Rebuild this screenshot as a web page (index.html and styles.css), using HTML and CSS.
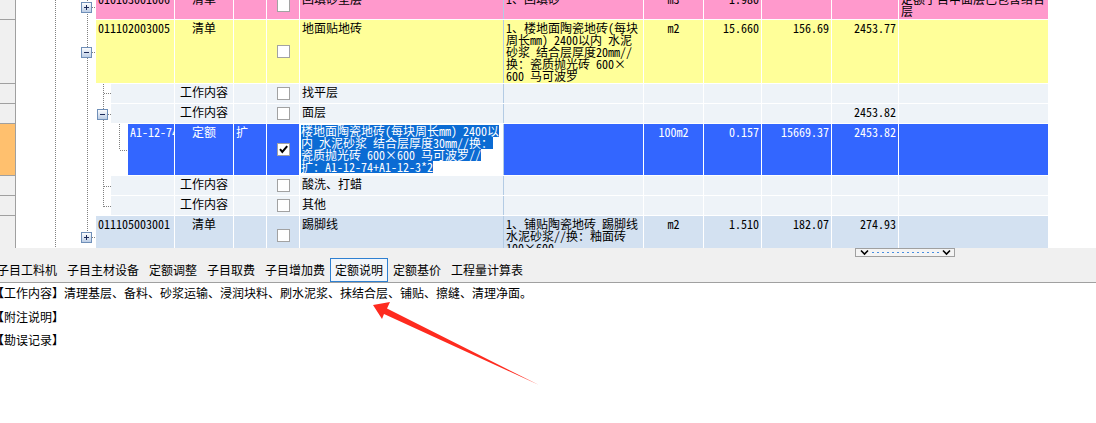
FILE: index.html
```html
<!DOCTYPE html>
<html>
<head>
<meta charset="utf-8">
<link rel="stylesheet" href="styles.css">
</head>
<body>
<div class="app">
  <div class="grid-area">
    <div class="rows">
      <div class="row pink h28">
        <div class="rh"></div><div class="gut"></div>
        <div class="c c1">010103001006</div>
        <div class="c c2">清单</div>
        <div class="c c3"></div>
        <div class="c c4"><span class="cb"></span></div>
        <div class="c c5">回填砂垫层</div>
        <div class="c c6">1、回填砂</div>
        <div class="c c7">m3</div>
        <div class="c c8">1.980</div>
        <div class="c c9"></div>
        <div class="c c10"></div>
        <div class="c c11">定额子目中面层已包含结合<br>层</div>
      </div>
      <div class="row yel h63">
        <div class="rh"></div><div class="gut"></div>
        <div class="c c1">011102003005</div>
        <div class="c c2">清单</div>
        <div class="c c3"></div>
        <div class="c c4"><span class="cb"></span></div>
        <div class="c c5">地面贴地砖</div>
        <div class="c c6">1、楼地面陶瓷地砖(每块<br>周长mm) 2400以内 水泥<br>砂浆 结合层厚度20mm//<br>换：瓷质抛光砖 600×<br>600 马可波罗</div>
        <div class="c c7">m2</div>
        <div class="c c8">15.660</div>
        <div class="c c9">156.69</div>
        <div class="c c10">2453.77</div>
        <div class="c c11"></div>
      </div>
      <div class="row sub h19">
        <div class="rh"></div><div class="gut"></div>
        <div class="c c1"></div>
        <div class="c c2">工作内容</div>
        <div class="c c3"></div>
        <div class="c c4"><span class="cb"></span></div>
        <div class="c c5">找平层</div>
        <div class="c c6"></div>
        <div class="c c7"></div>
        <div class="c c8"></div>
        <div class="c c9"></div>
        <div class="c c10"></div>
        <div class="c c11"></div>
      </div>
      <div class="row sub h19">
        <div class="rh"></div><div class="gut"></div>
        <div class="c c1"></div>
        <div class="c c2">工作内容</div>
        <div class="c c3"></div>
        <div class="c c4"><span class="cb"></span></div>
        <div class="c c5">面层</div>
        <div class="c c6"></div>
        <div class="c c7"></div>
        <div class="c c8"></div>
        <div class="c c9"></div>
        <div class="c c10">2453.82</div>
        <div class="c c11"></div>
      </div>
      <div class="row sel h51">
        <div class="rh"></div><div class="gut"></div>
        <div class="c c1">A1-12-74</div>
        <div class="c c2">定额</div>
        <div class="c c3">扩</div>
        <div class="c c4"><span class="cb"><svg width="11" height="11" viewBox="0 0 11 11"><path d="M2 5.2 L4.3 8 L9.2 2.2" fill="none" stroke="#000" stroke-width="2"/></svg></span></div>
        <div class="c c5"><span class="hl">楼地面陶瓷地砖(每块周长mm) 2400以</span><span class="hl">内 水泥砂浆 结合层厚度30mm//换：</span><span class="hl">瓷质抛光砖 600×600 马可波罗//</span><span class="hl">扩：A1-12-74+A1-12-3*2</span></div>
        <div class="c c6"></div>
        <div class="c c7">100m2</div>
        <div class="c c8">0.157</div>
        <div class="c c9">15669.37</div>
        <div class="c c10">2453.82</div>
        <div class="c c11"></div>
      </div>
      <div class="row sub h19">
        <div class="rh"></div><div class="gut"></div>
        <div class="c c1"></div>
        <div class="c c2">工作内容</div>
        <div class="c c3"></div>
        <div class="c c4"><span class="cb"></span></div>
        <div class="c c5">酸洗、打蜡</div>
        <div class="c c6"></div>
        <div class="c c7"></div>
        <div class="c c8"></div>
        <div class="c c9"></div>
        <div class="c c10"></div>
        <div class="c c11"></div>
      </div>
      <div class="row sub h19">
        <div class="rh"></div><div class="gut"></div>
        <div class="c c1"></div>
        <div class="c c2">工作内容</div>
        <div class="c c3"></div>
        <div class="c c4"><span class="cb"></span></div>
        <div class="c c5">其他</div>
        <div class="c c6"></div>
        <div class="c c7"></div>
        <div class="c c8"></div>
        <div class="c c9"></div>
        <div class="c c10"></div>
        <div class="c c11"></div>
      </div>
      <div class="row blu h39">
        <div class="rh"></div><div class="gut"></div>
        <div class="c c1">011105003001</div>
        <div class="c c2">清单</div>
        <div class="c c3"></div>
        <div class="c c4"><span class="cb"></span></div>
        <div class="c c5">踢脚线</div>
        <div class="c c6">1、铺贴陶瓷地砖 踢脚线<br>水泥砂浆//换：釉面砖<br>100×600</div>
        <div class="c c7">m2</div>
        <div class="c c8">1.510</div>
        <div class="c c9">182.07</div>
        <div class="c c10">274.93</div>
        <div class="c c11"></div>
      </div>
    </div>
    <svg class="tree" width="140" height="248" viewBox="0 0 140 248">
      <defs>
        <linearGradient id="tg" x1="0" y1="0" x2="0" y2="1">
          <stop offset="0" stop-color="#ffffff"/>
          <stop offset="1" stop-color="#b9cbe4"/>
        </linearGradient>
      </defs>
      <g stroke="#808080" stroke-dasharray="1 1" fill="none" shape-rendering="crispEdges">
        <line x1="55.5" y1="0" x2="55.5" y2="248"/>
        <line x1="87.5" y1="0" x2="87.5" y2="236"/>
        <line x1="92" y1="7.5" x2="96" y2="7.5"/>
        <line x1="92" y1="52.5" x2="96" y2="52.5"/>
        <line x1="92" y1="237.5" x2="96" y2="237.5"/>
        <line x1="103.5" y1="84" x2="103.5" y2="207"/>
        <line x1="104" y1="93.5" x2="111" y2="93.5"/>
        <line x1="108" y1="114.5" x2="111" y2="114.5"/>
        <line x1="104" y1="186.5" x2="111" y2="186.5"/>
        <line x1="104" y1="206.5" x2="111" y2="206.5"/>
        <line x1="119.5" y1="124" x2="119.5" y2="150"/>
        <line x1="120" y1="150.5" x2="128" y2="150.5"/>
      </g>
      <g shape-rendering="crispEdges">
        <rect x="81.5" y="2.5" width="10" height="10" fill="url(#tg)" stroke="#6f8fb8"/>
        <path d="M84 7.5 H89 M86.5 5 V10" stroke="#1c2b5a"/>
        <rect x="81.5" y="47.5" width="10" height="10" fill="url(#tg)" stroke="#6f8fb8"/>
        <path d="M84 52.5 H89" stroke="#1c2b5a"/>
        <rect x="97.5" y="109.5" width="10" height="10" fill="url(#tg)" stroke="#6f8fb8"/>
        <path d="M100 114.5 H105" stroke="#1c2b5a"/>
        <rect x="81.5" y="232.5" width="10" height="10" fill="url(#tg)" stroke="#6f8fb8"/>
        <path d="M84 237.5 H89 M86.5 235 V240" stroke="#1c2b5a"/>
      </g>
    </svg>
  </div>
  <div class="panel">
    <div class="hbar">
      <div class="split">
        <svg width="100" height="9" viewBox="0 0 100 9">
          <rect x="0.5" y="0.5" width="99" height="8" fill="#f4f4f4" stroke="#a0a0a0"/>
          <path d="M6 2.5 L9.5 6 L13 2.5" fill="none" stroke="#000" stroke-width="1.6"/>
          <path d="M88 2.5 L91.5 6 L95 2.5" fill="none" stroke="#000" stroke-width="1.6"/>
          <line x1="17" y1="4.5" x2="84" y2="4.5" stroke="#4a8fe0" stroke-dasharray="2 3"/>
        </svg>
      </div>
    </div>
    <div class="tabs">
      <span class="tab">子目工料机</span>
      <span class="tab">子目主材设备</span>
      <span class="tab">定额调整</span>
      <span class="tab">子目取费</span>
      <span class="tab">子目增加费</span>
      <span class="tab on">定额说明</span>
      <span class="tab">定额基价</span>
      <span class="tab">工程量计算表</span>
    </div>
  </div>
  <div class="content">
    <p>【工作内容】清理基层、备料、砂浆运输、浸润块料、刷水泥浆、抹结合层、铺贴、擦缝、清理净面。</p>
    <p>【附注说明】</p>
    <p>【勘误记录】</p>
  </div>
  <svg class="arrow" width="1096" height="423" viewBox="0 0 1096 423">
    <polygon points="373,305 390,302 387,308.5 539,385 384,314 382,319" fill="#fe2b1f"/>
  </svg>
</div>
</body>
</html>
```

FILE: styles.css
```css
* { box-sizing: border-box; margin: 0; padding: 0; }
html, body { width: 1096px; height: 423px; overflow: hidden; background: #fff; }
body { font-family: "Noto Sans CJK SC", "Noto Sans", sans-serif; color: #000; }
.app { position: relative; width: 1096px; height: 423px; }

.grid-area { position: relative; height: 248px; overflow: hidden; background: #fff; }
.rows { margin-top: -9px; }
.row {
  display: grid;
  grid-template-columns: 16px 80px 79px 59px 33px 33px 204px 140px 60px 58px 70px 67px 149px;
  margin-bottom: 1px;
  font-size: 12px;
  line-height: 12px;
  font-feature-settings: "hwid" 1;
}
.h28 { height: 28px; }
.h63 { height: 63px; }
.h19 { height: 19px; }
.h51 { height: 51px; }
.h39 { height: 39px; }

.rh { background: #f0f0f0; border-right: 1px solid #a0a0a0; box-shadow: 0 1px 0 #a0a0a0; }
.sel .rh { background: #ffc06e; }

.c { border-right: 1px solid #fff; padding: 2px 2px 0; overflow: hidden; white-space: nowrap; }
.c5 { border-right-color: #b3cbe4; }
.c11 { border-right: 0; }
.c2, .c7 { text-align: center; }
.c8, .c9, .c10 { text-align: right; }
.c4 { display: flex; align-items: center; justify-content: center; padding: 0; }
.cb { display: block; width: 13px; height: 13px; border: 1px solid #a2a2a2; background: #fff; }
.cb svg { display: block; }

.pink .c { background: #ff99cc; }
.yel .c { background: #ffff99; }
.sub .c { background: #eef3f8; }
.sub .c1 { margin-left: 15px; }
.sel .c { background: #3366ff; color: #fff; }
.sel .c1 { margin-left: 32px; }
.sel .c5 { background: #fff; padding: 1px 0 0 1px; }
.hl { display: block; width: fit-content; background: #0b6bd3; color: #fff; }
.blu .c { background: #d3e1f1; }

.tree { position: absolute; left: 0; top: 0; pointer-events: none; }

.panel { background: #f0f0f0; height: 35px; border-bottom: 1px solid #a0a0a0; }
.hbar { height: 10px; padding-left: 855px; }
.split svg { display: block; }
.tabs { display: flex; height: 24px; margin-left: -8px; }
.tab { padding: 0 4px; border: 1px solid transparent; font-size: 12px; line-height: 22px; white-space: nowrap; color: #000; }
.tab.on { border-color: #2f80d1; background: #f2f6fb; }

.content { margin-left: -8px; margin-top: -2px; font-size: 12px; line-height: 23.5px; }
.content p { white-space: nowrap; }

.arrow { position: absolute; left: 0; top: 0; pointer-events: none; }
```
